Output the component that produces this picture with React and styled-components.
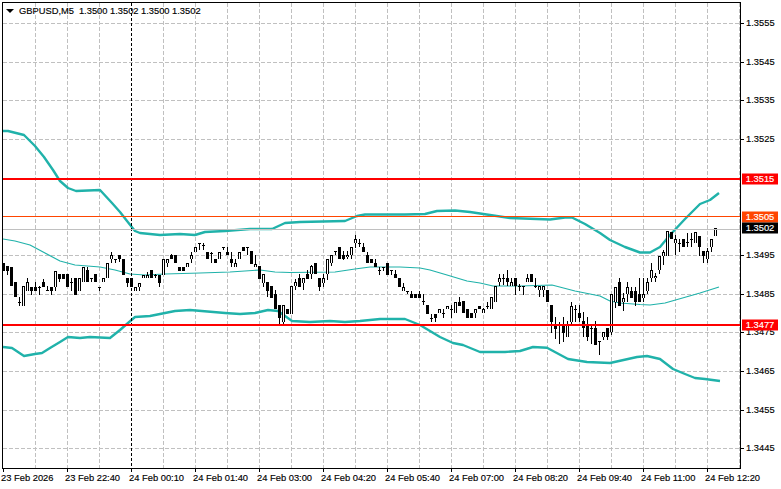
import React from 'react';
import styled, { createGlobalStyle } from 'styled-components';

const Global = createGlobalStyle`
  html, body { margin: 0; padding: 0; background: #fff; overflow: hidden; }
`;

const FONT = `"Liberation Sans", Arial, sans-serif`;

const Page = styled.div`
  width: 781px;
  height: 489px;
  box-sizing: border-box;
  padding: 2px 0 0 2px;
  background: #fff;
  font: 9.35px ${FONT};
  color: #000;
  -webkit-text-stroke: 0.15px currentColor;
`;
const Workspace = styled.div`
  display: flex;
  height: 467px;
`;
const Plot = styled.div`
  position: relative;
  flex: none;
  width: 739px;
  height: 467px;
  box-sizing: border-box;
  border: 1px solid #000;
`;
const ChartSvg = styled.svg`
  display: block;
`;
const Legend = styled.div`
  position: absolute;
  top: 1px;
  left: 3px;
  display: flex;
  align-items: center;
  height: 13px;
  white-space: pre;
  word-spacing: -0.15px;
`;
const LegendArrow = styled.span`
  width: 0;
  height: 0;
  margin-right: 5px;
  border-left: 4px solid transparent;
  border-right: 4px solid transparent;
  border-top: 4px solid #000;
`;
const PriceAxis = styled.div`
  position: relative;
  flex: 1;
`;
const PriceLabel = styled.span`
  position: absolute;
  left: 5px;
  transform: translateY(-50%);
  line-height: 12px;
  &::before {
    content: '';
    position: absolute;
    left: -5px;
    top: 50%;
    width: 3px;
    height: 1px;
    background: #000;
  }
`;
const PriceTag = styled.span`
  position: absolute;
  left: 1px;
  width: 36px;
  height: 11px;
  transform: translateY(-50%);
  line-height: 11px;
  text-align: center;
  color: #fff;
  background: ${(p) => p.$bg};
`;
const TimeAxis = styled.div`
  position: relative;
  height: 20px;
`;
const TimeLabel = styled.span`
  position: absolute;
  top: 3px;
  white-space: nowrap;
  line-height: 12px;
  &::before {
    content: '';
    position: absolute;
    left: 2px;
    top: -3px;
    width: 1px;
    height: 3px;
    background: #000;
  }
`;

const GRID_X = Array.from({ length: 23 }, (_, i) => 35 + 32 * i);
const GRID_Y = [23, 62, 100, 139, 178, 216, 255, 294, 332, 371, 410, 448];

const upper = [[3,131],[8,131],[24,135],[35,146],[44,157],[53,170],[60,181],[68,188],[76,191],[100,190],[112,203],[120,212],[127,221],[135,231],[140,233],[160,235],[180,234],[195,235],[205,232],[225,231],[250,229],[272,229],[285,223],[300,222],[345,221],[357,216],[365,214.5],[405,214.5],[425,214],[437,211],[455,210.5],[470,212],[490,215],[510,218],[550,219.5],[565,217.5],[572,217.5],[585,224],[600,233],[610,240],[625,247],[640,252.5],[650,252.5],[660,247],[670,235],[685,219],[700,204],[710,200],[719,193]];
const middle = [[3,239],[15,241],[30,245],[45,253],[60,261],[75,265],[100,267],[115,270],[130,274],[145,275],[165,274],[200,273],[230,272],[260,270],[275,272],[290,272.5],[335,272],[355,269],[370,267],[400,267],[420,268],[430,270],[447,275],[467,281],[480,283],[493,286],[520,286],[552,285],[575,291],[600,296],[610,301],[620,303],[640,304.5],[650,305],[665,303],[700,293],[719,287]];
const lower = [[3,347],[12,348],[24,356],[35,354],[42,353],[50,348],[60,342],[68,337],[80,338],[90,337],[110,338],[120,330],[128,323],[135,317],[150,316],[165,313],[175,311],[190,310],[225,313],[240,314],[255,313],[268,310],[278,311],[285,316],[292,321],[310,322],[330,321],[345,322],[360,321],[380,319],[405,319],[420,325],[440,337],[453,343],[463,345],[480,352],[505,352],[520,351],[533,347],[547,347.7],[568,359],[587,362],[610,363],[637,357],[647,356],[660,359],[673,369],[685,374],[695,378],[705,379],[720,381]];

// [white?, high, bodyTop, bodyBottom, low] — one per bar, 4px apart from x=3
const bars = [
[0,263,263,271,271],[0,266,266,271,275],[0,267,267,286,286],[0,282,282,297,297],[0,297,302,302,306],[1,286,286,306,306],[1,278,282,291,291],[0,287,287,291,295],[0,282,287,291,291],[0,286,287,287,295],
[0,279,282,287,287],[0,286,290,290,290],[0,287,287,291,295],[1,271,271,287,291],[0,274,274,279,282],[0,274,274,279,279],[0,274,274,287,287],[0,278,282,282,291],[0,278,278,295,295],[1,278,278,291,291],
[1,267,267,282,282],[0,267,270,282,282],[0,278,278,278,282],[0,274,274,282,282],[0,287,287,287,291],[1,278,278,282,282],[1,263,263,278,278],[1,252,255,259,263],[0,259,259,259,263],[0,255,255,259,262],
[0,259,259,275,275],[0,278,278,283,287],[0,278,278,287,287],[1,287,287,291,291],[1,283,283,287,291],[1,275,275,278,278],[1,272,275,278,278],[0,270,270,278,278],[0,274,275,275,278],[0,275,275,283,287],
[1,259,259,275,275],[1,259,259,263,267],[0,254,255,259,259],[0,255,255,263,263],[0,267,267,271,271],[0,267,267,271,271],[1,263,263,267,267],[1,252,255,259,263],[1,247,247,252,252],[0,243,243,243,250],
[0,243,245,245,250],[0,252,252,259,259],[0,252,253,253,263],[0,259,259,263,263],[1,252,252,259,259],[0,247,247,247,250],[0,247,252,255,255],[0,252,259,263,267],[1,259,263,267,267],[1,252,252,259,259],
[0,247,247,251,251],[0,247,247,247,255],[0,251,251,264,264],[1,255,264,267,267],[0,266,266,279,279],[1,274,274,283,287],[0,282,282,291,297],[0,286,286,298,298],[0,290,294,309,309],[0,305,305,318,324],
[1,305,305,322,324],[0,309,309,314,314],[1,286,286,314,314],[1,279,282,286,290],[0,274,278,287,287],[1,278,278,283,290],[0,270,274,279,279],[1,265,266,274,279],[0,263,263,274,274],[0,278,278,287,291],
[1,274,278,283,287],[1,259,259,274,280],[1,255,255,263,266],[0,251,251,251,255],[0,247,247,259,259],[0,251,255,259,260],[1,251,255,257,259],[1,247,247,255,259],[1,235,239,243,248],[0,239,243,243,247],
[0,243,247,252,252],[0,252,255,263,263],[0,259,259,263,263],[0,259,263,267,267],[0,267,270,270,275],[0,267,267,267,271],[0,263,263,275,275],[0,270,270,270,275],[0,270,274,278,278],[0,278,278,287,287],
[1,283,287,291,291],[0,291,291,291,294],[0,291,294,298,298],[0,294,294,298,298],[0,291,294,298,298],[0,294,301,301,305],[0,305,305,314,314],[0,314,318,318,322],[0,314,314,318,322],[1,309,309,313,313],
[0,309,313,313,318],[1,306,306,309,309],[0,305,309,309,318],[1,302,302,313,313],[0,297,302,306,306],[0,301,301,313,313],[0,309,309,318,318],[0,313,313,318,318],[1,309,309,313,318],[0,306,306,309,309],
[1,308,309,313,313],[0,302,306,306,309],[1,297,297,309,309],[1,286,286,302,302],[1,274,278,282,286],[0,274,278,278,285],[0,270,278,282,286],[1,278,282,286,286],[0,278,278,286,295],[0,284,286,286,291],
[0,286,286,286,295],[1,274,278,282,282],[0,274,274,282,282],[0,278,286,286,288],[1,286,286,290,297],[1,286,286,290,297],[0,290,290,302,302],[0,305,305,322,333],[0,317,325,329,339],[0,322,325,325,344],
[0,317,325,333,342],[1,321,325,337,337],[1,302,306,322,325],[0,305,309,309,322],[0,305,313,318,322],[0,312,321,328,337],[0,317,325,337,341],[0,324,328,328,344],[0,321,328,345,345],[0,341,341,341,355],
[1,332,332,337,340],[0,328,328,337,340],[1,294,294,332,335],[1,287,287,302,308],[0,278,282,306,306],[1,293,298,302,311],[1,282,287,294,302],[0,287,291,298,298],[0,287,291,302,306],[0,278,294,302,302],
[1,278,294,298,302],[1,278,282,291,294],[1,263,270,278,282],[1,273,276,278,282],[1,256,256,270,274],[1,250,252,256,265],[1,231,231,256,256],[0,232,232,239,239],[1,235,239,243,255],[0,239,243,243,252],
[0,239,239,247,247],[0,233,242,242,247],[0,233,239,239,247],[1,232,232,243,243],[0,236,236,247,256],[0,251,251,256,263],[1,248,251,259,263],[1,239,239,247,252],[1,228,228,236,236],
];

const toLine = (pts) => pts.map((p) => p.join(',')).join(' ');
const barX = (i) => 3 + 4 * i;

const Candle = ({ i, data: [white, high, top, bottom, low] }) => {
  const x = barX(i);
  return (
    <g shapeRendering="crispEdges">
      <rect x={x} y={high} width={1} height={Math.max(low - high, 1)} fill="#000" />
      <rect x={x - 1} y={top} width={3} height={Math.max(bottom - top, 1)} fill="#000" />
      {white === 1 && bottom - top > 1 && (
        <rect x={x} y={top + 1} width={1} height={bottom - top - 1} fill="#fff" />
      )}
    </g>
  );
};

const Chart = () => (
  <ChartSvg width="737" height="465" viewBox="3 3 737 465">
    <g stroke="#c0c0c0" strokeWidth="1" strokeDasharray="4 2" shapeRendering="crispEdges">
      {GRID_X.map((x) => (x === 131 ? null : <line key={x} x1={x + 0.5} x2={x + 0.5} y1="3" y2="468" />))}
      {GRID_Y.map((y) => <line key={y} x1="3" x2="740" y1={y + 0.5} y2={y + 0.5} />)}
    </g>
    <g fill="none" stroke="#20b2aa" strokeLinejoin="round">
      <polyline points={toLine(upper)} strokeWidth="2.4" />
      <polyline points={toLine(middle)} strokeWidth="1.2" />
      <polyline points={toLine(lower)} strokeWidth="2.4" />
    </g>
    {bars.map((b, i) => <Candle key={i} i={i} data={b} />)}
    <line x1="131.5" x2="131.5" y1="3" y2="468" stroke="#000" strokeDasharray="3 2" shapeRendering="crispEdges" />
    <g shapeRendering="crispEdges">
      <line x1="3" x2="740" y1="229.5" y2="229.5" stroke="#c0c0c0" />
      <line x1="3" x2="740" y1="216.5" y2="216.5" stroke="#ff4500" />
      <line x1="3" x2="740" y1="179" y2="179" stroke="#f00" strokeWidth="2" />
      <line x1="3" x2="740" y1="325" y2="325" stroke="#f00" strokeWidth="2" />
    </g>
  </ChartSvg>
);

const prices = [['1.3555',23],['1.3545',62],['1.3535',100],['1.3525',139],['1.3495',255],['1.3485',294],['1.3475',332],['1.3465',371],['1.3455',410],['1.3445',448]];
const tags = [['1.3515',179,'#f00'],['1.3505',217,'#ff4500'],['1.3502',228,'#000'],['1.3477',325,'#f00']];
const times = ['23 Feb 2026','23 Feb 22:40','24 Feb 00:10','24 Feb 01:40','24 Feb 03:00','24 Feb 04:20','24 Feb 05:40','24 Feb 07:00','24 Feb 08:20','24 Feb 09:40','24 Feb 11:00','24 Feb 12:20'];

export default function App() {
  return (
    <Page>
      <Global />
      <Workspace>
        <Plot>
          <Chart />
          <Legend>
            <LegendArrow />
            {'GBPUSD,M5  1.3500 1.3502 1.3500 1.3502'}
          </Legend>
        </Plot>
        <PriceAxis>
          {prices.map(([t, y]) => <PriceLabel key={t} style={{ top: y - 2 }}>{t}</PriceLabel>)}
          {tags.map(([t, y, bg]) => <PriceTag key={t} $bg={bg} style={{ top: y - 2 }}>{t}</PriceTag>)}
        </PriceAxis>
      </Workspace>
      <TimeAxis>
        {times.map((t, i) => <TimeLabel key={t} style={{ left: 64 * i - 1 }}>{t}</TimeLabel>)}
      </TimeAxis>
    </Page>
  );
}
